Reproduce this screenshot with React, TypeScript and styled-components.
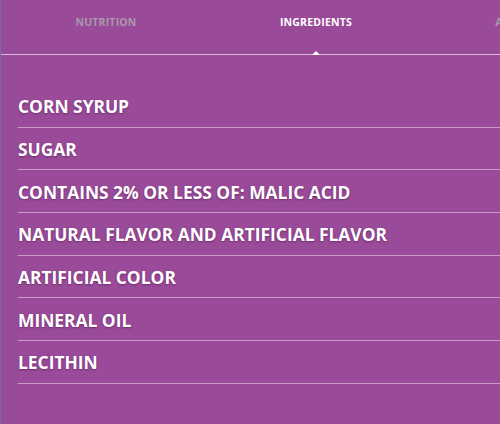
import React from 'react';
import styled, { createGlobalStyle } from 'styled-components';

const Global = createGlobalStyle`
  html, body {
    margin: 0;
    padding: 0;
    background: #994a98;
  }
  body {
    font-family: "Open Sans", "Liberation Sans", sans-serif;
  }
`

const Panel = styled.div`
  width: 500px;
  height: 424px;
  box-sizing: border-box;
  background: #994a98;
  border-left: 1px solid #6d6cb3;
  overflow: hidden;
  display: flex;
  flex-direction: column;
`

const Tabs = styled.div`
  display: flex;
  height: 54px;
  border-bottom: 1px solid #d9b9d8;
  white-space: nowrap;
`

const Tab = styled.div<{ $active?: boolean }>`
  position: relative;
  flex: 0 0 210px;
  display: flex;
  justify-content: center;
  padding-top: 15px;
  box-sizing: border-box;
  font-size: 10.5px;
  font-weight: 700;
  letter-spacing: 0.2px;
  color: ${p => (p.$active ? '#ffffff' : '#aa98ae')};

  ${p => p.$active && `
    &::after {
      content: '';
      position: absolute;
      bottom: -1px;
      left: 50%;
      margin-left: -4px;
      border-left: 4px solid transparent;
      border-right: 4px solid transparent;
      border-bottom: 4px solid #ffffff;
    }
  `}
`

const List = styled.ul`
  list-style: none;
  margin: 0;
  padding: 30px 0 0 17px;
`

const Item = styled.li`
  height: 42.7px;
  box-sizing: border-box;
  display: flex;
  align-items: center;
  padding-top: 1px;
  border-bottom: 1px solid #c69ac5;
  color: #ffffff;
  font-size: 17.4px;
  font-weight: 700;
  text-shadow: 0 1px 2px rgba(60, 10, 60, 0.45);
`

const ingredients = [
  'CORN SYRUP',
  'SUGAR',
  'CONTAINS 2% OR LESS OF: MALIC ACID',
  'NATURAL FLAVOR AND ARTIFICIAL FLAVOR',
  'ARTIFICIAL COLOR',
  'MINERAL OIL',
  'LECITHIN',
];

const App: React.FC = () => {
  return (
    <Panel>
      <Global />
      <Tabs>
        <Tab>NUTRITION</Tab>
        <Tab $active>INGREDIENTS</Tab>
        <Tab>ALLERGENS</Tab>
      </Tabs>
      <List>
        {ingredients.map(name => (
          <Item key={name}>{name}</Item>
        ))}
      </List>
    </Panel>
  );
}

export default App;
